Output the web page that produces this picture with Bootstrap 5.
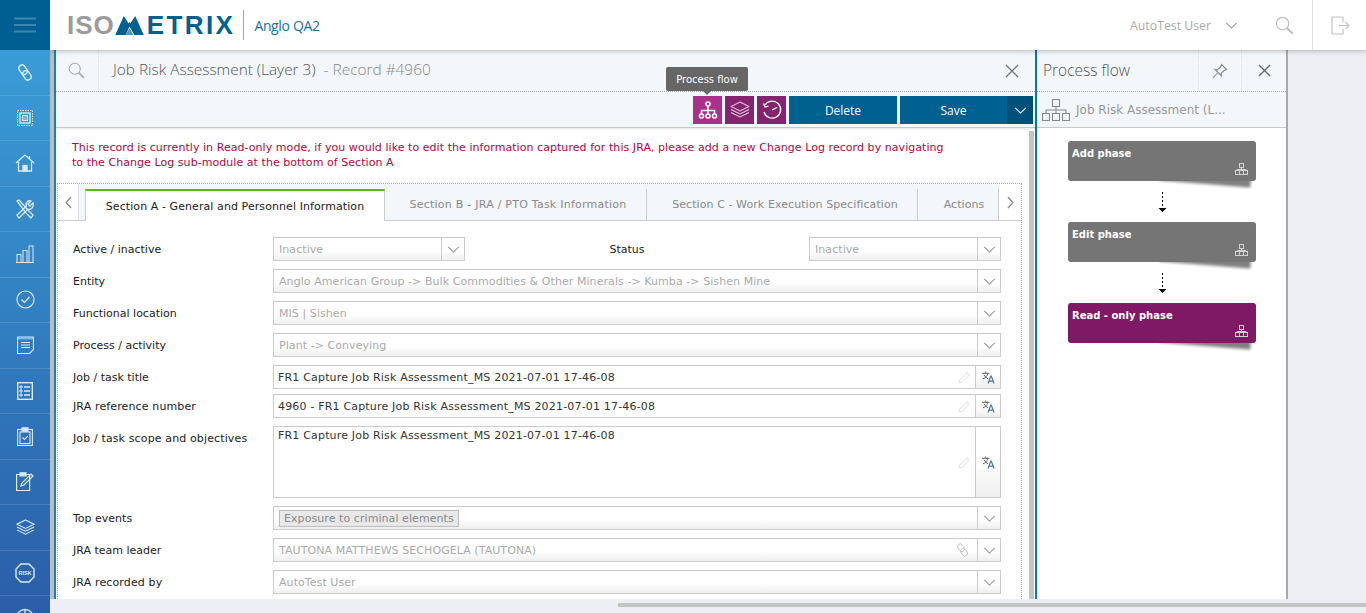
<!DOCTYPE html>
<html lang="en">
<head>
  <meta charset="UTF-8">
  <title>Isometrix - Job Risk Assessment</title>
  <link href="https://cdn.jsdelivr.net/npm/bootstrap@5.3.3/dist/css/bootstrap.min.css" rel="stylesheet">
  <style>
    html, body { height: 100%; overflow: hidden; }
    body { font-family: "DejaVu Sans", Verdana, sans-serif; font-size: 11px; color: #333; background: #eeeef5; }
    svg { display: block; flex-shrink: 0; }
    .app-shell { width: 1366px; height: 613px; overflow: hidden; }

    /* sidebar */
    .side-rail { width: 50px; flex-shrink: 0; background: linear-gradient(#3ba2da, #2a5ea8); z-index: 3; }
    .burger-box { height: 50px; background: #005f92; }
    .rail-item { height: 45.5px; border-bottom: 1px solid rgba(255,255,255,.12); color: #d8eaf6; flex-shrink: 0; }

    /* top bar */
    .top-strip { height: 50px; background: #fff; box-shadow: 0 1px 5px rgba(0,0,0,.25); z-index: 2; flex-shrink: 0; }
    .logo-grey { font: 700 26px "Liberation Sans", Arial, sans-serif; letter-spacing: 1px; color: #9b9b9b; line-height: 1; }
    .logo-blue { font: 700 26px "Liberation Sans", Arial, sans-serif; letter-spacing: 2.4px; color: #00608f; line-height: 1; margin-left: 3px; }
    .logo-sep { width: 1px; height: 30px; background: #7fb0c9; margin: 0 10px 0 8px; }
    .logo-tenant { font: 400 14px "Open Sans", sans-serif; color: #1d6f9c; letter-spacing: -.35px; }
    .user-name { font: 400 12.3px "Open Sans", sans-serif; color: #aaa; }
    .top-sep { width: 1px; height: 50px; background: #ddd; }

    /* panels */
    .work-row { height: 549px; flex-shrink: 0; }
    .rec-panel { width: 985px; border-left: 4px solid #bdbdbd; flex-shrink: 0; background: #fff; position: relative; box-shadow: inset 2px 0 0 #0f86b5; padding-left: 2px; }
    .flow-panel { width: 253px; flex-shrink: 0; background: #fff; border-left: 2px solid #0a78ad; border-right: 2px solid #a9a9a9; }
    .head-strip { height: 42px; background: #f3f6fa; border-bottom: 1px dotted #aaa; flex-shrink: 0; }
    .head-title { font: 300 15.4px "Open Sans", sans-serif; color: #555; padding-bottom: 2px; padding-left: 14px; }
    .head-title span { color: #888; }
    .search-cell { width: 43px; height: 41px; border-right: 1px dotted #ddd; padding-right: 2px; }
    .tool-strip { height: 36px; background: #f3f6fa; border-bottom: 1px solid #c9c9c9; box-shadow: 0 1px 2px rgba(0,0,0,.1); flex-shrink: 0; padding-right: 2px; padding-top: 4px; }
    .tool-btn { width: 29px; height: 28px; background: #84246e; margin-right: 3px; }
    .tool-btn.is-on { background: #a93189; }
    .blue-btn { height: 28px; background: #00608f; color: #fff; font-size: 12px; font-family: "Open Sans", sans-serif; padding-top: 1px; }
    .save-caret { width: 26px; height: 28px; background: #00507a; margin-top: -1px; }
    .tip-box { position: absolute; left: -27px; top: -29px; width: 82px; height: 24px; background: #666; color: #fff; font-size: 10px; border-radius: 2px; z-index: 5; }
    .tip-box::after { content: ""; position: absolute; left: 36px; bottom: -4px; border: 5px solid transparent; border-bottom: 0; border-top-color: #666; }

    /* record body */
    .scroll-thumb { width: 5px; margin: 3px 1px 0 6px; background: #c4c4c4; flex-shrink: 0; }
    .ro-note { color: #b2063f; line-height: 15px; padding: 12px 0 0 16px; height: 55px; width: 920px; letter-spacing: .055px; }
    .tab-box { border-top: 1px dotted #aaa; border-left: 1px dotted #aaa; border-right: 1px dotted #aaa; margin: 0 0 0 1px; width: 965px; height: 430px; }
    .tab-line { height: 37px; background: #f3f6fa; border-bottom: 1px solid #ccc; color: #8a8a8a; letter-spacing: .08px; }
    .tab-arrow { width: 22px; height: 36px; background: #fff; flex-shrink: 0; }
    .tab-arrow.is-left { width: 21px; }
    .tab-active { width: 300px; height: 32px; margin: 5px 0 -1px 6px; background: #fff; border: 1px solid #ccc; border-top: 2px solid #5db800; border-bottom: 0; color: #222; padding-top: 2px; flex-shrink: 0; }
    .tab-plain { height: 31px; margin-top: 5px; border-right: 1px solid #ccc; flex-shrink: 0; padding-top: 2px; }
    .tab-b { width: 262px; padding-left: 5px; letter-spacing: .24px; }
    .tab-c { width: 271px; padding-left: 6px; }
    .tab-d { width: 81px; padding-left: 12px; }
    .fld-line { margin-bottom: 8px; padding-left: 15px; padding-right: 20px; color: #222; }
    .fld-line.is-tight { margin-bottom: 5px; }
    .fld-label { width: 200px; flex-shrink: 0; padding-top: 2px; }
    .fld-label.is-wide { letter-spacing: .13px; }
    .fld-status { padding: 2px 20px 0 0; }
    .fld-box { height: 24px; border: 1px solid #ccc; background: linear-gradient(#fff 55%, #efefef); color: #aaa; min-width: 0; }
    .fld-box.is-plain { background: #fff; color: #333; }
    .fld-text { padding: 2px 0 0 5px; flex-grow: 1; white-space: nowrap; overflow: hidden; letter-spacing: .07px; }
    .fld-box.is-plain .fld-text { letter-spacing: .18px; padding-left: 4px; }
    .fld-chev { width: 23px; height: 100%; border-left: 1px solid #ccc; color: #999; }
    .fld-trans { width: 25px; height: 100%; border-left: 1px solid #ccc; background: linear-gradient(#fff 50%, #eee); }
    .area-box { height: 72px; }
    .fld-box.is-plain .area-text { padding-top: 1px; }
    .chip-tag { border: 1px solid #bbb; background: #e8e8e8; color: #888; padding: 0 4px; line-height: 15px; }

    /* process flow */
    .flow-title { font: 300 15.5px "Open Sans", sans-serif; color: #555; padding-left: 6px; padding-bottom: 2px; }
    .flow-cell { width: 43px; height: 41px; border-left: 1px dotted #ddd; }
    .flow-cell.is-last { width: 45px; }
    .flow-sub { height: 36px; background: #f3f6fa; border-bottom: 1px solid #c9c9c9; color: #999; font-size: 12px; flex-shrink: 0; padding-left: 5px; gap: 6px; }
    .phase-list { padding-top: 13px; padding-left: 31px; z-index: 0; }
    .phase-card { width: 188px; height: 40px; border-radius: 3px; background: #757575; color: #fff; font-size: 10px; font-weight: 700; position: relative; padding: 5px 4px; line-height: 15px; }
    .phase-card.is-current { background: #7f1865; }
    .phase-card::before { content: ""; position: absolute; z-index: -1; left: 92px; right: 5px; top: 28px; height: 15px; background: #808080; filter: blur(1.5px); transform: rotate(4.5deg); }
    .phase-mark { position: absolute; right: 8px; bottom: 6px; color: #d2d2d2; }
    .phase-gap { height: 41px; width: 188px; }
    .gap-arrow { margin-top: 10px; }
    .foot-strip { height: 14px; background: #eeeef5; flex-shrink: 0; padding: 4px 0 0 568px; z-index: 3; }
    .foot-thumb { height: 4px; background: #c4c4c4; }
  </style>
</head>
<body>
<svg width="0" height="0" class="position-absolute">
  <defs>
    <symbol id="i-chev" viewBox="0 0 14 8"><path d="M1 1l6 6 6-6" fill="none" stroke="currentColor" stroke-width="1.2"/></symbol>
    <symbol id="i-x" viewBox="0 0 14 14"><path d="M1 1l12 12M13 1L1 13" fill="none" stroke="currentColor" stroke-width="1.4"/></symbol>
    <symbol id="i-search" viewBox="0 0 20 20"><circle cx="8" cy="8" r="6.5" fill="none" stroke="currentColor" stroke-width="1.2"/><path d="M12.6 12.6l6 6" stroke="currentColor" stroke-width="2"/></symbol>
    <symbol id="i-pencil" viewBox="0 0 14 14"><path d="M1 13l.8-3.4L10 1.4 12.6 4l-8.2 8.2zM8.8 2.6l2.6 2.6" fill="none" stroke="#ddd" stroke-width="1"/></symbol>
    <symbol id="i-link" viewBox="0 0 16 17"><g fill="none" stroke="currentColor"><rect x="3" y=".8" width="6.500" height="10" rx="3.200" transform="rotate(-35 6 6)"/><rect x="6.500" y="6.200" width="6.500" height="10" rx="3.200" transform="rotate(-35 10 11)"/></g></symbol>
    <symbol id="i-trans" viewBox="0 0 14 14"><path d="M0 2.500h8M4 .5v2M6.500 2.500C6 5 3.500 7.500 1 8.500M2 4c1 2 3 3.500 4.500 4.500" fill="none" stroke="#555" stroke-width="1"/><path d="M6.500 13.500L9.500 5.500h.5l3 8M7.700 11h4.600" fill="none" stroke="#4d74a0" stroke-width="1.300"/></symbol>
    <symbol id="i-tree" viewBox="0 0 20 18"><circle cx="10" cy="3" r="2" fill="none" stroke="currentColor" stroke-width="1.600"/><path d="M10 5v4M3.500 13V9.500h13V13M10 9v4" fill="none" stroke="currentColor" stroke-width="1.600"/><circle cx="3.500" cy="15" r="2" fill="none" stroke="currentColor" stroke-width="1.600"/><circle cx="10" cy="15" r="2" fill="none" stroke="currentColor" stroke-width="1.600"/><circle cx="16.500" cy="15" r="2" fill="none" stroke="currentColor" stroke-width="1.600"/></symbol>
    <symbol id="i-mini" viewBox="0 0 13 12"><g fill="none" stroke="currentColor"><rect x="4.500" y=".5" width="4" height="4"/><path d="M6.500 4.500v2M2 7.500v-1h9v1"/><rect x=".5" y="7.500" width="4" height="4"/><rect x="4.500" y="7.500" width="4" height="4"/><rect x="8.500" y="7.500" width="4" height="4"/></g></symbol>
    <symbol id="i-layers" viewBox="0 0 20 18"><path d="M10 1l9 4.500-9 4.500-9-4.500zM1 8.500l9 4.500 9-4.500M1 11.500l9 4.500 9-4.500" fill="none" stroke="currentColor" stroke-width="1.100"/></symbol>
  </defs>
</svg>

<div class="app-shell d-flex">
  <nav class="side-rail d-flex flex-column overflow-hidden">
    <div class="burger-box d-flex align-items-center justify-content-center flex-shrink-0">
      <svg width="22" height="16" viewBox="0 0 22 16"><path d="M0 1.500h22M0 8h22M0 14.500h22" stroke="#3e88b0" stroke-width="2"/></svg>
    </div>
    <div class="rail-item d-flex align-items-center justify-content-center">
      <svg width="16" height="17" stroke-width="1.400"><use href="#i-link"/></svg>
    </div>
    <div class="rail-item d-flex align-items-center justify-content-center">
      <svg width="16" height="16" viewBox="0 0 16 16" fill="none" stroke="currentColor"><rect x=".5" y=".5" width="15" height="15" stroke-dasharray="1.500 1"/><rect x="3" y="3" width="10" height="10" stroke-width="1.400"/><rect x="5.500" y="5.500" width="5" height="5" fill="currentColor" fill-opacity=".4"/></svg>
    </div>
    <div class="rail-item d-flex align-items-center justify-content-center">
      <svg width="20" height="18" viewBox="0 0 20 18" fill="none" stroke="currentColor" stroke-width="1.300"><path d="M1 9l9-8 9 8M3.500 8v9h13V8M14.500 2v3"/><rect x="8" y="11.500" width="4" height="5.500" fill="currentColor"/></svg>
    </div>
    <div class="rail-item d-flex align-items-center justify-content-center">
      <svg width="20" height="20" viewBox="0 0 20 20" fill="none" stroke="currentColor" stroke-width="1.300"><path d="M2 2l2-1 9 10 5 5-2 3-5-5z"/><path d="M18 4l-3 3-2-2 3-3c-3-1-6 2-4.500 5L2 16l2 3 9-9c2.500 1 6-1 5-6z"/></svg>
    </div>
    <div class="rail-item d-flex align-items-center justify-content-center">
      <svg width="18" height="18" viewBox="0 0 18 18" fill="none" stroke="currentColor"><path d="M0 17.500h18"/><rect x="1" y="9.500" width="4" height="8"/><rect x="7" y="5.500" width="4" height="12"/><rect x="13" y="1" width="4" height="16.500"/></svg>
    </div>
    <div class="rail-item d-flex align-items-center justify-content-center">
      <svg width="19" height="19" viewBox="0 0 19 19" fill="none" stroke="currentColor" stroke-width="1.200"><circle cx="9.500" cy="9.500" r="8.500"/><path d="M5.500 9.500l3 3 5-5.500"/></svg>
    </div>
    <div class="rail-item d-flex align-items-center justify-content-center">
      <svg width="17" height="18" viewBox="0 0 17 18" fill="none" stroke="currentColor"><path d="M.5 1h16v12.500l-4 4H.5z" stroke-width="1.200"/><path d="M.5 2.500h16" stroke-width="2" stroke-dasharray="1 1"/><path d="M4 6.500h9M4 9h9M4 11.500h9"/></svg>
    </div>
    <div class="rail-item d-flex align-items-center justify-content-center">
      <svg width="16" height="18" viewBox="0 0 16 18" fill="none" stroke="currentColor"><rect x=".7" y=".7" width="14.600" height="16.600" stroke-width="1.400"/><path d="M7 5h6M7 9h6M7 13h6" stroke-width="1.400"/><path d="M3 4h2v2H3zM3 8h2v2H3zM3 12h2v2H3z"/></svg>
    </div>
    <div class="rail-item d-flex align-items-center justify-content-center">
      <svg width="16" height="19" viewBox="0 0 16 19" fill="none" stroke="currentColor" stroke-width="1.100"><rect x=".6" y="2.500" width="14.800" height="16"/><rect x="3" y="5" width="10" height="11.500"/><path d="M5 .8h6v3.500H5z" fill="currentColor"/><path d="M5.500 10.500l2 2 3.500-3.500"/></svg>
    </div>
    <div class="rail-item d-flex align-items-center justify-content-center">
      <svg width="18" height="19" viewBox="0 0 18 19" fill="none" stroke="currentColor" stroke-width="1.200"><path d="M.6 2.500h13v16H.6z"/><path d="M4 .8h6v3H4z" fill="currentColor"/><path d="M5 14l1-3 9-9 2 2-9 9z"/></svg>
    </div>
    <div class="rail-item d-flex align-items-center justify-content-center">
      <svg width="19" height="17"><use href="#i-layers"/></svg>
    </div>
    <div class="rail-item d-flex align-items-center justify-content-center">
      <svg width="20" height="20" viewBox="0 0 20 20" fill="none" stroke="currentColor" stroke-width="1.400"><path d="M6 1h8l5 5v8l-5 5H6l-5-5V6z"/><text x="10" y="12" text-anchor="middle" font-size="5.500" font-weight="700" fill="currentColor" stroke="none" font-family="Liberation Sans, sans-serif">RISK</text></svg>
    </div>
    <div class="rail-item d-flex align-items-center justify-content-center">
      <svg width="20" height="20" viewBox="0 0 20 20" fill="none" stroke="currentColor" stroke-width="1.300"><circle cx="10" cy="10" r="8.500"/><path d="M1.500 10h17M10 1.500v17"/></svg>
    </div>
  </nav>

  <div class="d-flex flex-column flex-grow-1" style="min-width:0">
    <header class="top-strip d-flex align-items-center">
      <div class="d-flex align-items-center" style="padding-left:17px">
        <span class="logo-grey">ISO</span>
        <svg width="29" height="19" viewBox="0 0 30 20" fill="#00608f"><path d="M0 20L9 0l5 8 1-2 1 2 5-8 9 20H20l-5-9-4 9z"/><path d="M11 20l4-7 4 7z" fill="#4d94b8"/></svg>
        <span class="logo-blue">ETRIX</span>
        <span class="logo-sep"></span>
        <span class="logo-tenant">Anglo QA2</span>
      </div>
      <div class="d-flex align-items-center ms-auto">
        <span class="user-name">AutoTest User</span>
        <svg width="13" height="7" style="color:#999;margin-left:14px"><use href="#i-chev"/></svg>
        <svg width="19" height="19" style="color:#bbb;margin:0 18px 0 37px"><use href="#i-search"/></svg>
        <span class="top-sep"></span>
        <svg width="19" height="19" viewBox="0 0 19 19" fill="none" stroke="#c4c4c4" stroke-width="1.200" style="margin:0 16px 0 18px"><path d="M12 6V1H1v17h11v-5M8 9.500h10M14.500 6l3.500 3.500-3.500 3.500"/></svg>
      </div>
    </header>

    <div class="work-row d-flex">
      <section class="rec-panel d-flex flex-column">
        <div class="head-strip d-flex align-items-center">
          <div class="search-cell d-flex align-items-center justify-content-center" style="color:#aaa">
            <svg width="17" height="17"><use href="#i-search"/></svg>
          </div>
          <div class="head-title flex-grow-1">Job Risk Assessment (Layer 3) <span>&nbsp;- Record #4960</span></div>
          <svg class="me-3" width="14" height="14" style="color:#777"><use href="#i-x"/></svg>
        </div>
        <div class="tool-strip d-flex justify-content-end align-items-start">
          <div class="tool-btn is-on d-flex align-items-center justify-content-center position-relative text-white">
            <svg width="20" height="18"><use href="#i-tree"/></svg>
            <div class="tip-box d-flex align-items-center justify-content-center">Process flow</div>
          </div>
          <div class="tool-btn d-flex align-items-center justify-content-center" style="color:#e5c8dd">
            <svg width="20" height="18"><use href="#i-layers"/></svg>
          </div>
          <div class="tool-btn d-flex align-items-center justify-content-center text-white">
            <svg width="20" height="20" viewBox="0 0 20 20" fill="none" stroke="currentColor" stroke-width="1.300"><path d="M3 5a8.500 8.500 0 1 1-1 7"/><path d="M1.500 3.500L3 7l3.500-1M10 10l5-2.500"/></svg>
          </div>
          <div class="blue-btn d-flex align-items-center justify-content-center" style="width:108px;margin-right:3px">Delete</div>
          <div class="blue-btn d-flex align-items-center" style="width:133px">
            <span class="flex-grow-1 text-center">Save</span>
            <div class="save-caret d-flex align-items-center justify-content-center"><svg width="13" height="7"><use href="#i-chev"/></svg></div>
          </div>
        </div>

        <div class="d-flex flex-grow-1 overflow-hidden">
          <div class="flex-grow-1">
            <div class="ro-note">This record is currently in Read-only mode, if you would like to edit the information captured for this JRA, please add a new Change Log record by navigating<br>to the Change Log sub-module at the bottom of Section A</div>
            <div class="tab-box">
              <div class="tab-line d-flex align-items-start mb-3">
                <div class="tab-arrow is-left d-flex align-items-center justify-content-center border-end" style="color:#888"><svg width="7" height="13" viewBox="0 0 7 13" fill="none" stroke="currentColor" stroke-width="1.200"><path d="M6 1L1 6.500 6 12"/></svg></div>
                <div class="tab-active d-flex align-items-center justify-content-center">Section A - General and Personnel Information</div>
                <div class="tab-plain tab-b d-flex align-items-center justify-content-center">Section B - JRA / PTO Task Information</div>
                <div class="tab-plain tab-c d-flex align-items-center justify-content-center">Section C - Work Execution Specification</div>
                <div class="tab-plain tab-d d-flex align-items-center justify-content-center">Actions</div>
                <div class="tab-arrow d-flex align-items-center justify-content-center" style="color:#888"><svg width="7" height="13" viewBox="0 0 7 13" fill="none" stroke="currentColor" stroke-width="1.200"><path d="M1 1l5 5.500L1 12"/></svg></div>
              </div>

              <div class="fld-line d-flex align-items-center">
                <div class="fld-label">Active / inactive</div>
                <div class="fld-box d-flex align-items-center" style="width:192px"><div class="fld-text">Inactive</div><div class="fld-chev d-flex align-items-center justify-content-center"><svg width="13" height="7"><use href="#i-chev"/></svg></div></div>
                <div class="fld-status text-center flex-grow-1">Status</div>
                <div class="fld-box d-flex align-items-center" style="width:192px"><div class="fld-text">Inactive</div><div class="fld-chev d-flex align-items-center justify-content-center"><svg width="13" height="7"><use href="#i-chev"/></svg></div></div>
              </div>
              <div class="fld-line d-flex align-items-center">
                <div class="fld-label">Entity</div>
                <div class="fld-box d-flex align-items-center flex-grow-1"><div class="fld-text">Anglo American Group -&gt; Bulk Commodities &amp; Other Minerals -&gt; Kumba -&gt; Sishen Mine</div><div class="fld-chev d-flex align-items-center justify-content-center"><svg width="13" height="7"><use href="#i-chev"/></svg></div></div>
              </div>
              <div class="fld-line d-flex align-items-center">
                <div class="fld-label">Functional location</div>
                <div class="fld-box d-flex align-items-center flex-grow-1"><div class="fld-text">MIS | Sishen</div><div class="fld-chev d-flex align-items-center justify-content-center"><svg width="13" height="7"><use href="#i-chev"/></svg></div></div>
              </div>
              <div class="fld-line d-flex align-items-center">
                <div class="fld-label">Process / activity</div>
                <div class="fld-box d-flex align-items-center flex-grow-1"><div class="fld-text">Plant -&gt; Conveying</div><div class="fld-chev d-flex align-items-center justify-content-center"><svg width="13" height="7"><use href="#i-chev"/></svg></div></div>
              </div>
              <div class="fld-line is-tight d-flex align-items-center">
                <div class="fld-label">Job / task title</div>
                <div class="fld-box is-plain d-flex align-items-center flex-grow-1"><div class="fld-text">FR1 Capture Job Risk Assessment_MS 2021-07-01 17-46-08</div><svg class="me-1" width="13" height="13"><use href="#i-pencil"/></svg><div class="fld-trans d-flex align-items-center justify-content-center"><svg width="13" height="13"><use href="#i-trans"/></svg></div></div>
              </div>
              <div class="fld-line d-flex align-items-center">
                <div class="fld-label is-wide">JRA reference number</div>
                <div class="fld-box is-plain d-flex align-items-center flex-grow-1"><div class="fld-text">4960 - FR1 Capture Job Risk Assessment_MS 2021-07-01 17-46-08</div><svg class="me-1" width="13" height="13"><use href="#i-pencil"/></svg><div class="fld-trans d-flex align-items-center justify-content-center"><svg width="13" height="13"><use href="#i-trans"/></svg></div></div>
              </div>
              <div class="fld-line d-flex align-items-start">
                <div class="fld-label is-wide" style="padding-top:5px">Job / task scope and objectives</div>
                <div class="fld-box is-plain area-box d-flex align-items-start flex-grow-1"><div class="fld-text area-text align-self-stretch">FR1 Capture Job Risk Assessment_MS 2021-07-01 17-46-08</div><svg class="me-1 align-self-center" width="13" height="13"><use href="#i-pencil"/></svg><div class="fld-trans d-flex align-items-center justify-content-center"><svg width="13" height="13"><use href="#i-trans"/></svg></div></div>
              </div>
              <div class="fld-line d-flex align-items-center">
                <div class="fld-label">Top events</div>
                <div class="fld-box d-flex align-items-center flex-grow-1"><div class="fld-text"><span class="chip-tag d-inline-block">Exposure to criminal elements</span></div><div class="fld-chev d-flex align-items-center justify-content-center"><svg width="13" height="7"><use href="#i-chev"/></svg></div></div>
              </div>
              <div class="fld-line d-flex align-items-center">
                <div class="fld-label">JRA team leader</div>
                <div class="fld-box d-flex align-items-center flex-grow-1"><div class="fld-text">TAUTONA MATTHEWS SECHOGELA (TAUTONA)</div><svg class="me-2" width="13" height="14" stroke-width="1" style="color:#bbb"><use href="#i-link"/></svg><div class="fld-chev d-flex align-items-center justify-content-center"><svg width="13" height="7"><use href="#i-chev"/></svg></div></div>
              </div>
              <div class="fld-line d-flex align-items-center">
                <div class="fld-label is-wide">JRA recorded by</div>
                <div class="fld-box d-flex align-items-center flex-grow-1"><div class="fld-text">AutoTest User</div><div class="fld-chev d-flex align-items-center justify-content-center"><svg width="13" height="7"><use href="#i-chev"/></svg></div></div>
              </div>
            </div>
          </div>
          <div class="scroll-thumb"></div>
        </div>
      </section>

      <aside class="flow-panel d-flex flex-column">
        <div class="head-strip d-flex align-items-center">
          <div class="flow-title flex-grow-1">Process flow</div>
          <div class="flow-cell d-flex align-items-center justify-content-center">
            <svg width="16" height="16" viewBox="0 0 16 16" fill="none" stroke="#888" stroke-width="1.100"><path d="M1 15l4.500-5M9.500 1.500l5 5-2.500 1-3 3 .5 2.500L3 6.500l2.500.5 3-3z"/></svg>
          </div>
          <div class="flow-cell is-last d-flex align-items-center justify-content-center" style="color:#666">
            <svg width="13" height="13"><use href="#i-x"/></svg>
          </div>
        </div>
        <div class="flow-sub d-flex align-items-center">
          <svg width="28" height="22" viewBox="0 0 28 22" fill="none" stroke="#888" stroke-width="1.100"><rect x="10.500" y=".5" width="7" height="7"/><path d="M14 7.500V11M4 14.500V11h20v3.500M14 11v3.500"/><rect x=".5" y="14.500" width="7" height="7"/><rect x="10.500" y="14.500" width="7" height="7"/><rect x="20.500" y="14.500" width="7" height="7"/></svg>
          <span>Job Risk Assessment (L...</span>
        </div>
        <div class="phase-list position-relative">
          <div class="phase-card">Add phase<svg class="phase-mark" width="13" height="12"><use href="#i-mini"/></svg></div>
          <div class="phase-gap d-flex justify-content-center align-items-start"><svg class="gap-arrow" width="9" height="24" viewBox="0 0 9 24"><path d="M4.500 1v16" stroke="#000" stroke-dasharray="2 2"/><path d="M.5 17h8l-4 4z" fill="#000"/></svg></div>
          <div class="phase-card">Edit phase<svg class="phase-mark" width="13" height="12"><use href="#i-mini"/></svg></div>
          <div class="phase-gap d-flex justify-content-center align-items-start"><svg class="gap-arrow" width="9" height="24" viewBox="0 0 9 24"><path d="M4.500 1v16" stroke="#000" stroke-dasharray="2 2"/><path d="M.5 17h8l-4 4z" fill="#000"/></svg></div>
          <div class="phase-card is-current">Read - only phase<svg class="phase-mark" width="13" height="12"><use href="#i-mini"/></svg></div>
        </div>
      </aside>
    </div>

    <div class="foot-strip"><div class="foot-thumb"></div></div>
  </div>
</div>
<script src="https://cdn.jsdelivr.net/npm/bootstrap@5.3.3/dist/js/bootstrap.bundle.min.js"></script>
</body>
</html>
